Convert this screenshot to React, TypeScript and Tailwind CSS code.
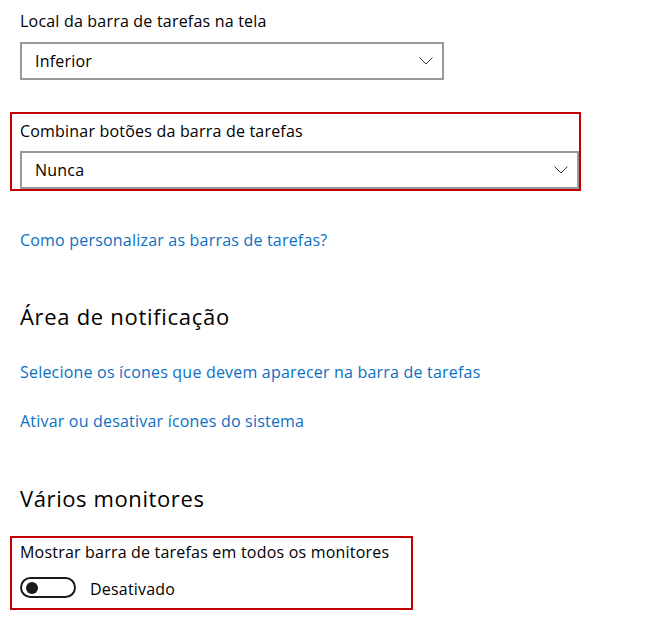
import React from "react";

const font = { fontFamily: '"Segoe UI", "Open Sans", "Noto Sans", sans-serif' };

function Chevron() {
  return (
    <svg width="14" height="8" viewBox="0 0 14 8" fill="none">
      <polyline points="0.5,0.5 7,7 13.5,0.5" stroke="#333" strokeWidth="1" />
    </svg>
  );
}

function Dropdown({ value, width }: { value: string; width: string }) {
  return (
    <div className={`flex h-[38px] ${width} items-center justify-between border-2 border-[#999999] bg-white pl-[13px] pr-[9px]`}>
      <span className="text-[16px] leading-[20px] tracking-[0.2px] text-black">{value}</span>
      <Chevron />
    </div>
  );
}

export default function App() {
  return (
    <div className="min-h-[626px] w-[649px] bg-white pl-[20px] pt-[11px] text-black" style={font}>
      <div className="text-[16px] leading-[20px] tracking-[0.2px]">Local da barra de tarefas na tela</div>
      <div className="mt-[11px]">
        <Dropdown value="Inferior" width="w-[424px]" />
      </div>

      <div className="ml-[-10px] mt-[32px] w-[571px] border-2 border-[#c00000] pl-[8px] pt-[7px]">
        <div className="text-[16px] leading-[20px] tracking-[0.2px]">Combinar botões da barra de tarefas</div>
        <div className="mt-[10px]">
          <Dropdown value="Nunca" width="w-full" />
        </div>
      </div>

      <div className="mt-[39px] text-[16px] leading-[20px] tracking-[0.2px] text-[#0a6fc4]">
        Como personalizar as barras de tarefas?
      </div>

      <div className="mt-[52px] text-[22px] leading-[28px] tracking-[0.7px]">Área de notificação</div>

      <div className="mt-[32px] text-[16px] leading-[20px] tracking-[0.2px] text-[#0a6fc4]">
        Selecione os ícones que devem aparecer na barra de tarefas
      </div>
      <div className="mt-[29px] text-[16px] leading-[20px] tracking-[0.2px] text-[#0a6fc4]">
        Ativar ou desativar ícones do sistema
      </div>

      <div className="mt-[53px] text-[22px] leading-[28px] tracking-[0.6px]">Vários monitores</div>

      <div className="ml-[-10px] mt-[24px] w-[403px] border-2 border-[#c00000] pb-[9px] pl-[8px] pt-[4px]">
        <div className="text-[16px] leading-[20px] tracking-[0.2px]">Mostrar barra de tarefas em todos os monitores</div>
        <div className="mt-[15px] flex items-start gap-[14px]">
          <div className="flex h-[21px] w-[56px] items-center rounded-full border-2 border-[#1a1a1a] pl-[4px]">
            <div className="h-[12px] w-[12px] rounded-full bg-[#1a1a1a]" />
          </div>
          <span className="mt-[2px] text-[16px] leading-[20px] tracking-[0.2px]">Desativado</span>
        </div>
      </div>
    </div>
  );
}
